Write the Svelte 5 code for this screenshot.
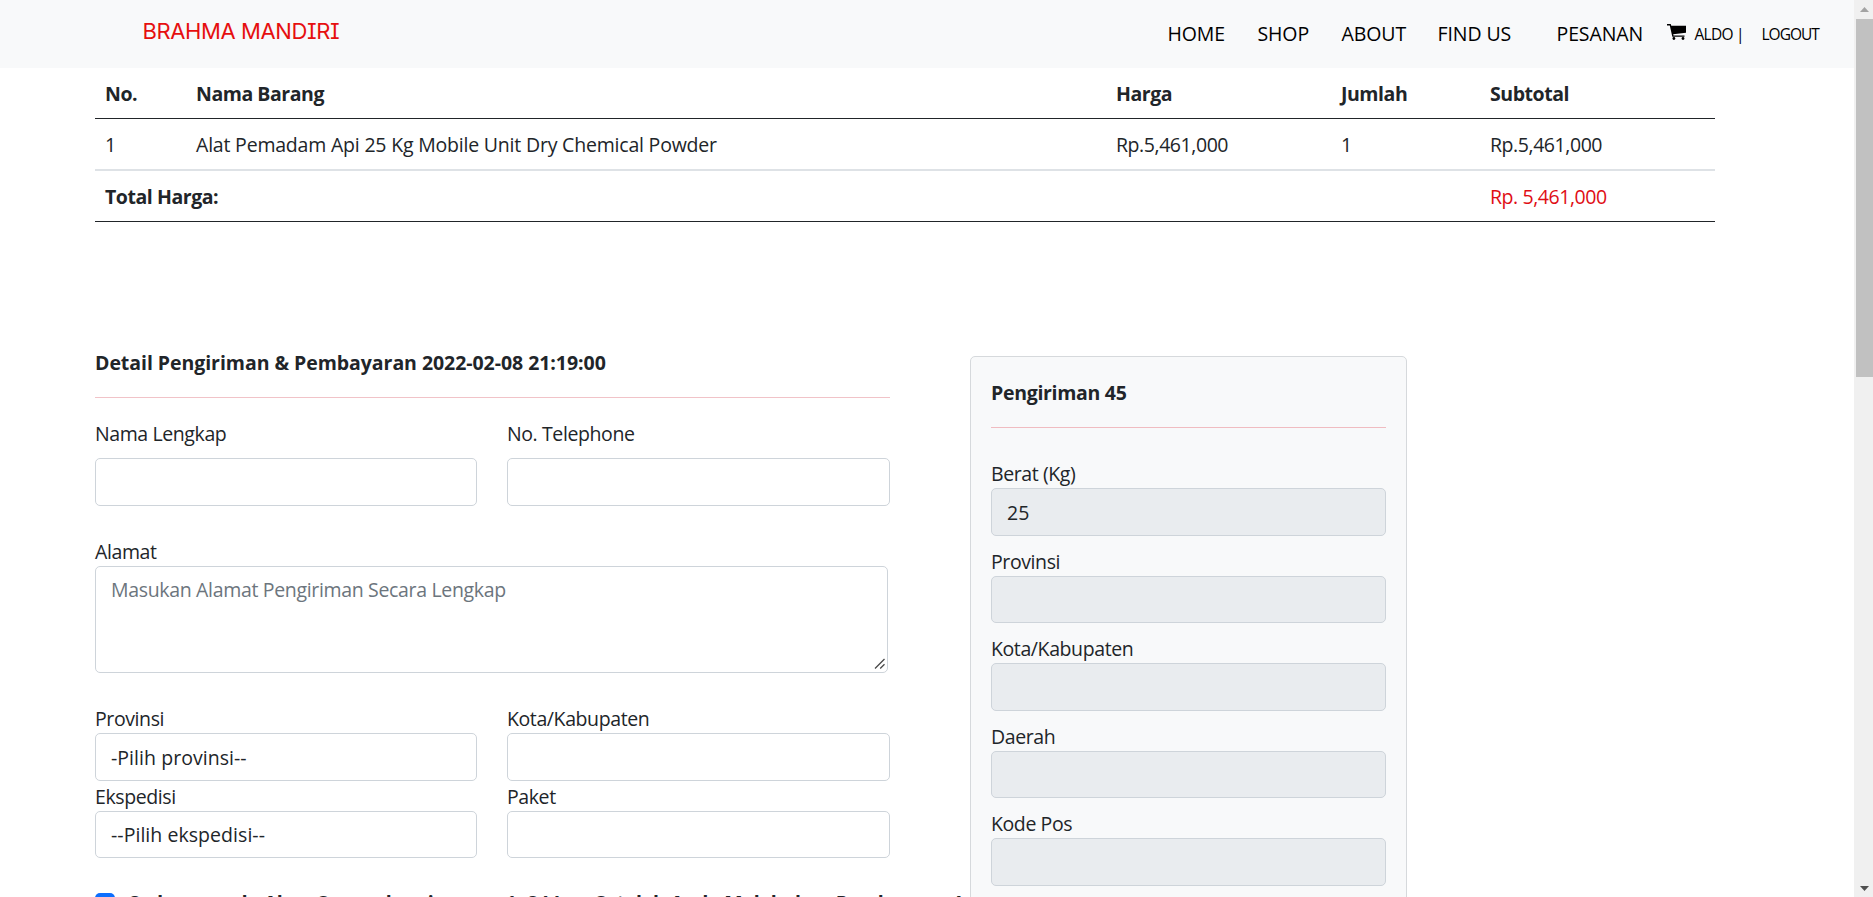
<script>
  const links = [
    { label: 'HOME', width: 90 },
    { label: 'SHOP', width: 84 },
    { label: 'ABOUT', width: 96 },
    { label: 'FIND US', width: 119 },
    { label: 'PESANAN', width: 110 }
  ];
  const summary = [
    { label: 'Berat (Kg)', value: '25' },
    { label: 'Provinsi', value: '' },
    { label: 'Kota/Kabupaten', value: '' },
    { label: 'Daerah', value: '' },
    { label: 'Kode Pos', value: '' }
  ];
</script>

<div class="window">
  <div class="page">
    <header>
      <a class="brand" href="#home">BRAHMA MANDIRI</a>
      <nav>
        {#each links as link}
          <a href="#nav" style="width: {link.width}px">{link.label}</a>
        {/each}
        <svg class="cart" width="19" height="16" viewBox="0 0 19 16" aria-hidden="true">
          <path d="M0 0h3.7l.6 1.8H19v7L6.2 10.2l.3 1.3h11v1.3H5.3L2.8 1.4H0z" fill="#000" />
          <circle cx="6.9" cy="14.5" r="1.4" /><circle cx="16" cy="14.5" r="1.4" />
        </svg>
        <a class="small user" href="#user">ALDO |</a>
        <a class="small" href="#logout">LOGOUT</a>
      </nav>
    </header>

    <table>
      <colgroup>
        <col style="width: 91px" /><col style="width: 920px" /><col style="width: 225px" />
        <col style="width: 149px" /><col style="width: 235px" />
      </colgroup>
      <thead>
        <tr><th>No.</th><th>Nama Barang</th><th>Harga</th><th>Jumlah</th><th>Subtotal</th></tr>
      </thead>
      <tbody>
        <tr class="item">
          <td>1</td><td class="name">Alat Pemadam Api 25 Kg Mobile Unit Dry Chemical Powder</td>
          <td>Rp.5,461,000</td><td>1</td><td>Rp.5,461,000</td>
        </tr>
        <tr class="total">
          <th colspan="4">Total Harga:</th><td class="sum">Rp. 5,461,000</td>
        </tr>
      </tbody>
    </table>

    <main>
      <form>
        <h4>Detail Pengiriman &amp; Pembayaran 2022-02-08 21:19:00</h4>
        <hr />
        <div class="pair names">
          <label>Nama Lengkap<input type="text" /></label>
          <label>No. Telephone<input type="text" /></label>
        </div>
        <label class="address">
          Alamat<textarea placeholder="Masukan Alamat Pengiriman Secara Lengkap"></textarea>
          <svg class="grip" width="12" height="12" viewBox="0 0 12 12" aria-hidden="true">
            <path d="M1 10.5L10.5 1M6.2 10.5L10.5 6.2" fill="none" stroke="#4a4a4a" stroke-width="1.3" />
          </svg>
        </label>
        <div class="pair">
          <label>Provinsi<select><option>-Pilih provinsi--</option></select></label>
          <label>Kota/Kabupaten<select></select></label>
          <label>Ekspedisi<select class="low"><option>--Pilih ekspedisi--</option></select></label>
          <label>Paket<select class="low"></select></label>
        </div>
        <div class="notice">
          <span class="check">
            <svg width="20" height="20" viewBox="0 0 20 20"><path d="M6 10l3 3 6-6" fill="none" stroke="#fff" stroke-width="3" stroke-linecap="round" stroke-linejoin="round" /></svg>
          </span>
          <strong>Orderan anda Akan Segera kami proses 1x24 Jam Setelah Anda Melakukan Pembayaran!</strong>
        </div>
      </form>

      <aside>
        <h4>Pengiriman 45</h4>
        <hr />
        {#each summary as row}
          <label>{row.label}<input type="text" value={row.value} readonly /></label>
        {/each}
      </aside>
    </main>
  </div>

  <div class="scrollbar">
    <svg width="17" height="19" viewBox="0 0 17 19"><path d="M4 12l4.5-5 4.5 5z" fill="#a3a3a3" /></svg>
    <div class="thumb"></div>
    <svg class="down" width="17" height="17" viewBox="0 0 17 17"><path d="M4 6h9l-4.5 5z" fill="#505050" /></svg>
  </div>
</div>

<style>
  :global(body) { margin: 0; overflow: hidden; }
  .window {
    display: flex; width: 1873px; height: 897px; overflow: hidden; background: #fff;
    font: 400 19.5px/30px "Open Sans", "Noto Sans", sans-serif; color: #212529;
  }
  .window *, .window { box-sizing: border-box; }
  .page { width: 1854px; height: 897px; flex: none; overflow: hidden; }
  header { display: flex; justify-content: space-between; height: 68px; background: #f8f9fa; padding-left: 142.5px; }
  a { color: #000; text-decoration: none; white-space: nowrap; }
  .brand { font: 400 22px/30px Inter, sans-serif; font-feature-settings: "cv08"; letter-spacing: -0.4px; color: #e60f0f; padding-top: 16px; }
  nav { display: flex; width: 686.5px; padding-top: 19px; letter-spacing: -0.1px; }
  nav a { flex: none; }
  .cart { flex: none; margin: 5px 9px 0 0; }
  .small { font-size: 15.5px; letter-spacing: -1px; }
  .user { width: 67px; letter-spacing: -0.75px; }

  table { width: 1620px; margin-left: 95px; table-layout: fixed; border-collapse: separate; border-spacing: 0; }
  th, td { padding: 11px 10px 9px; height: 30px; text-align: left; border-bottom: 1px solid #212529; box-sizing: content-box; letter-spacing: -0.43px; line-height: 30px; font-weight: 400; white-space: nowrap; }
  th { font-weight: 700; letter-spacing: -0.45px; }
  td.name { letter-spacing: -0.2px; }
  .item td { border-bottom: 2px solid #dee2e6; }
  td.sum { color: #e00d14; }

  main { display: flex; align-items: flex-start; padding: 125px 0 0 95px; }
  form { width: 795px; flex: none; margin-right: 80px; }
  h4 { margin: 0; padding-top: 1px; font-size: 19.5px; line-height: 30px; font-weight: 700; letter-spacing: -0.05px; white-space: nowrap; }
  hr { height: 1px; border: 0; margin: 19px 0 20px; background: #f1c3c8; }
  label { display: block; padding-top: 1px; letter-spacing: -0.4px; }
  input, select, textarea {
    display: block; width: 100%; height: 48px; margin: -1px 0 0; padding: 1px 15px 0; border: 1px solid #ced4da; border-radius: 5px;
    background: #fff; font: inherit; color: #212529; appearance: none; outline: 0;
  }
  select { letter-spacing: 0.05px; opacity: 1; }
  .low { height: 47px; padding-top: 0; }
  .pair { display: grid; grid-template-columns: 382px 383px; column-gap: 30px; }
  .names input { margin-top: 9px; }
  .names { margin-bottom: 30px; }
  textarea { width: 793px; height: 107px; padding: 8px 15px; letter-spacing: -0.33px; resize: none; }
  textarea::placeholder { color: #6c757d; opacity: 1; }
  .address { position: relative; margin-bottom: 30px; }
  .grip { position: absolute; left: 778.5px; bottom: 3px; }
  .notice { display: flex; margin-top: 27px; white-space: nowrap; gap: 12px; }
  .check { width: 20px; height: 20px; margin-top: 8px; flex: none; border-radius: 5px; background: #0d6efd; }
  .check svg { display: block; }
  strong { padding-top: 2.5px; letter-spacing: -0.3px; }

  aside { width: 437px; height: 700px; margin-top: 9px; padding: 20px; border: 1px solid #d6d9dc; border-radius: 5px; background: #f8f9fa; }
  aside h4 { letter-spacing: -0.3px; }
  aside hr { margin-bottom: 30px; background: #f0bcc1; }
  aside label { margin-bottom: 10px; }
  aside input { height: 47.5px; background: #e9ecef; }

  .scrollbar { display: flex; flex-direction: column; width: 19px; height: 897px; padding-left: 2px; background: #f0f0f0; }
  .scrollbar svg { display: block; flex: none; }
  .thumb { height: 358px; background: #c1c1c1; }
  .down { margin-top: auto; }
</style>
